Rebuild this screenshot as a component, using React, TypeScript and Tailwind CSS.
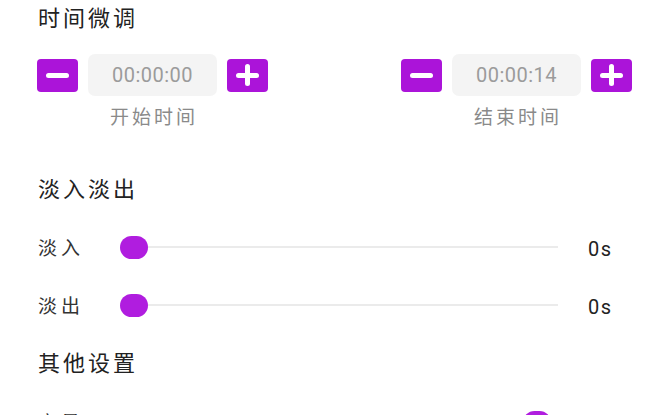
import React from 'react';

const PURPLE = 'bg-[#ab14d9]';

function StepButton({ kind }: { kind: 'minus' | 'plus' }) {
  return (
    <button className={`relative w-[41px] h-[33px] rounded-[4px] ${PURPLE} flex items-center justify-center`}>
      <span className="absolute w-[23px] h-[5px] rounded-full bg-white" />
      {kind === 'plus' && <span className="absolute w-[5px] h-[22px] rounded-full bg-white" />}
    </button>
  );
}

function TimeControl({ value, label }: { value: string; label: string }) {
  return (
    <div className="flex flex-col">
      <div className="flex items-center gap-[10px]">
        <StepButton kind="minus" />
        <div className="w-[129px] h-[42px] rounded-[7px] bg-[#f4f4f4] flex items-center justify-center text-[20px] tracking-[0.5px] text-[#9b9b9b]">
          {value}
        </div>
        <StepButton kind="plus" />
      </div>
      <div className="mt-[10px] h-[24px] leading-[24px] text-center text-[19px] tracking-[3px] pl-[3px] text-[#8a8a8a]">
        {label}
      </div>
    </div>
  );
}

function SliderRow({ label, value, pos }: { label: string; value?: string; pos: number }) {
  return (
    <div className="h-[58px] flex items-center">
      <div className="w-[82px] mt-[4px] text-[19px] tracking-[4px] text-[#333]">{label}</div>
      <div className="relative flex-1 h-[24px]">
        <div className="absolute left-[14px] right-0 top-[11px] h-[2px] bg-[#ebebeb]" />
        <div
          className="absolute top-[1px] w-[28px] h-[23px] rounded-full bg-[#b01ddf]"
          style={{ left: pos }}
        />
      </div>
      <div className="w-[44px] ml-[30px] mt-[3px] text-[20px] tracking-[1.5px] text-[#222]">{value}</div>
    </div>
  );
}

function Heading({ children }: { children: React.ReactNode }) {
  return <div className="h-[37px] leading-[37px] text-[22px] tracking-[3px] text-[#222]">{children}</div>;
}

export default function App() {
  return (
    <div
      className="w-[670px] h-[415px] overflow-hidden bg-white px-[38px]"
      style={{ fontFamily: 'Roboto, "Noto Sans CJK SC", sans-serif' }}
    >
      <Heading>时间微调</Heading>
      <div className="mt-[17px] flex justify-between -ml-[1px]">
        <TimeControl value="00:00:00" label="开始时间" />
        <TimeControl value="00:00:14" label="结束时间" />
      </div>
      <div className="mt-[41px]">
        <Heading>淡入淡出</Heading>
      </div>
      <div className="mt-[10px]">
        <SliderRow label="淡入" value="0s" pos={0} />
        <SliderRow label="淡出" value="0s" pos={0} />
      </div>
      <div className="mt-[11px]">
        <Heading>其他设置</Heading>
      </div>
      <div className="mt-[11px]">
        <SliderRow label="音量" pos={403} />
      </div>
    </div>
  );
}
